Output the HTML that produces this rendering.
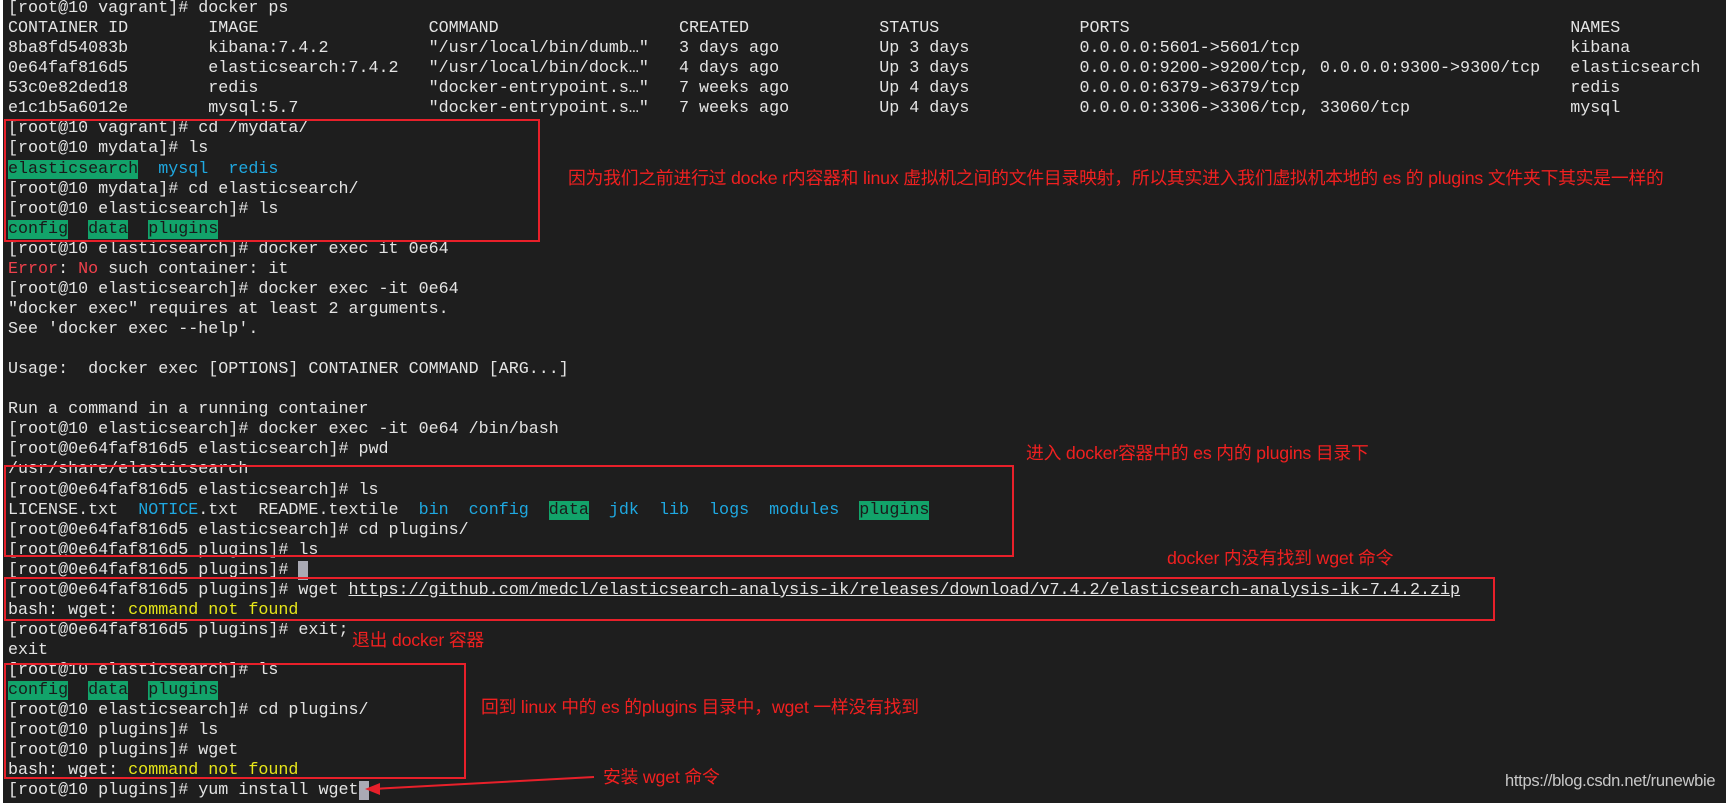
<!DOCTYPE html>
<html><head><meta charset="utf-8"><style>
html,body{margin:0;padding:0;}
body{width:1726px;height:803px;background:#1e1e1e;position:relative;overflow:hidden;}
.strip{position:absolute;left:0;top:0;width:3px;height:803px;background:#fff;}
pre{position:absolute;left:8px;top:-1px;margin:0;font-family:"Liberation Mono",monospace;font-size:16.7px;line-height:20.07px;color:#e4e4e4;white-space:pre;}
.g{background:#12a36a;color:#1a1a1a;}
.b{color:#1fa8e0;}
.r{color:#f0414c;}
.y{color:#e6e61a;}
.u{text-decoration:underline;}
.cur{background:#aaaab4;color:#aaaab4;}
.box{position:absolute;border:2px solid #e8202a;box-sizing:border-box;}
.a{position:absolute;color:#f02020;font-family:"Liberation Sans","Noto Sans CJK SC",sans-serif;font-size:17.8px;line-height:22px;white-space:nowrap;letter-spacing:-0.2px;}
.wm{position:absolute;left:1505px;top:772px;color:#c8c8c8;font-family:"Liberation Sans",sans-serif;font-size:16.5px;letter-spacing:-0.3px;}
</style></head><body>
<div class="strip"></div>
<pre>[root@10 vagrant]# docker ps
CONTAINER ID        IMAGE                 COMMAND                  CREATED             STATUS              PORTS                                            NAMES
8ba8fd54083b        kibana:7.4.2          "/usr/local/bin/dumb…"   3 days ago          Up 3 days           0.0.0.0:5601-&gt;5601/tcp                           kibana
0e64faf816d5        elasticsearch:7.4.2   "/usr/local/bin/dock…"   4 days ago          Up 3 days           0.0.0.0:9200-&gt;9200/tcp, 0.0.0.0:9300-&gt;9300/tcp   elasticsearch
53c0e82ded18        redis                 "docker-entrypoint.s…"   7 weeks ago         Up 4 days           0.0.0.0:6379-&gt;6379/tcp                           redis
e1c1b5a6012e        mysql:5.7             "docker-entrypoint.s…"   7 weeks ago         Up 4 days           0.0.0.0:3306-&gt;3306/tcp, 33060/tcp                mysql
[root@10 vagrant]# cd /mydata/
[root@10 mydata]# ls
<span class="g">elasticsearch</span>  <span class="b">mysql</span>  <span class="b">redis</span>
[root@10 mydata]# cd elasticsearch/
[root@10 elasticsearch]# ls
<span class="g">config</span>  <span class="g">data</span>  <span class="g">plugins</span>
[root@10 elasticsearch]# docker exec it 0e64
<span class="r">Error</span>: <span class="r">No</span> such container: it
[root@10 elasticsearch]# docker exec -it 0e64
"docker exec" requires at least 2 arguments.
See 'docker exec --help'.

Usage:  docker exec [OPTIONS] CONTAINER COMMAND [ARG...]

Run a command in a running container
[root@10 elasticsearch]# docker exec -it 0e64 /bin/bash
[root@0e64faf816d5 elasticsearch]# pwd
/usr/share/elasticsearch
[root@0e64faf816d5 elasticsearch]# ls
LICENSE.txt  <span class="b">NOTICE</span>.txt  README.textile  <span class="b">bin</span>  <span class="b">config</span>  <span class="g">data</span>  <span class="b">jdk</span>  <span class="b">lib</span>  <span class="b">logs</span>  <span class="b">modules</span>  <span class="g">plugins</span>
[root@0e64faf816d5 elasticsearch]# cd plugins/
[root@0e64faf816d5 plugins]# ls
[root@0e64faf816d5 plugins]# <span class="cur"> </span>
[root@0e64faf816d5 plugins]# wget <span class="u">https://github.com/medcl/elasticsearch-analysis-ik/releases/download/v7.4.2/elasticsearch-analysis-ik-7.4.2.zip</span>
bash: wget: <span class="y">command not found</span>
[root@0e64faf816d5 plugins]# exit;
exit
[root@10 elasticsearch]# ls
<span class="g">config</span>  <span class="g">data</span>  <span class="g">plugins</span>
[root@10 elasticsearch]# cd plugins/
[root@10 plugins]# ls
[root@10 plugins]# wget
bash: wget: <span class="y">command not found</span>
[root@10 plugins]# yum install wget<span class="cur"> </span></pre>
<div class="box" style="left:4px;top:119px;width:536px;height:123px;"></div>
<div class="box" style="left:4px;top:465px;width:1010px;height:92px;"></div>
<div class="box" style="left:4px;top:577px;width:1491px;height:44px;"></div>
<div class="box" style="left:4px;top:663px;width:462px;height:116px;"></div>
<div class="a" style="left:568px;top:167px;">因为我们之前进行过 docke r内容器和 linux 虚拟机之间的文件目录映射，所以其实进入我们虚拟机本地的 es 的 plugins 文件夹下其实是一样的</div>
<div class="a" style="left:1026px;top:442px;">进入 docker容器中的 es 内的 plugins 目录下</div>
<div class="a" style="left:1167px;top:547px;">docker 内没有找到 wget 命令</div>
<div class="a" style="left:352px;top:629px;">退出 docker 容器</div>
<div class="a" style="left:481px;top:696px;">回到 linux 中的 es 的plugins 目录中，wget 一样没有找到</div>
<div class="a" style="left:603px;top:766px;">安装 wget 命令</div>
<svg style="position:absolute;left:0;top:0" width="1726" height="803">
<line x1="594" y1="777" x2="372" y2="789" stroke="#e8202a" stroke-width="2"/>
<polygon points="365,789 380,783 380,795" fill="#e8202a"/>
</svg>
<div class="wm">https://blog.csdn.net/runewbie</div>
</body></html>
